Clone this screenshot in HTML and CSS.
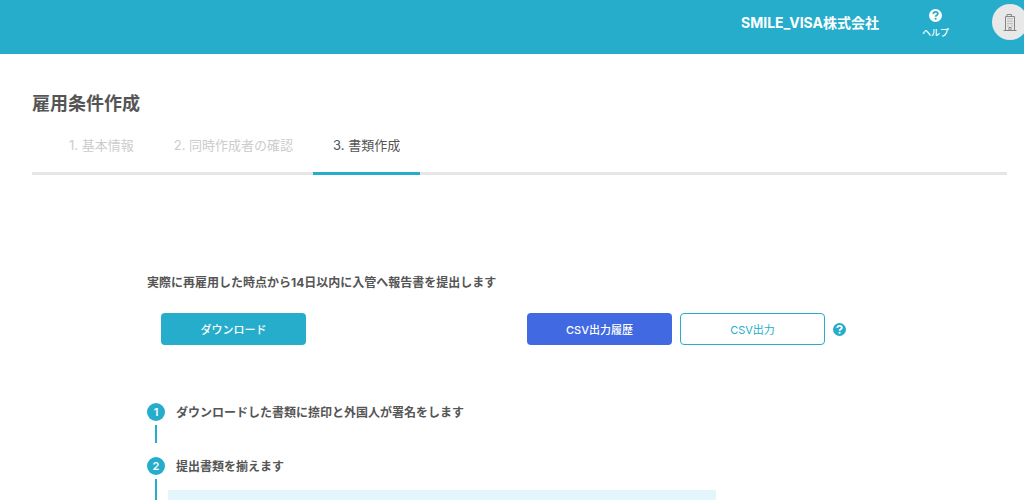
FILE: index.html
```html
<!DOCTYPE html>
<html lang="ja">
<head>
<meta charset="utf-8">
<meta name="viewport" content="width=device-width, initial-scale=1">
<title>雇用条件作成</title>
<link rel="stylesheet" href="styles.css">
</head>
<body>
<header class="header">
  <span class="company">SMILE_VISA株式会社</span>
  <a class="help" href="#help">
    <svg class="help-icon" viewBox="0 0 24 24" aria-hidden="true"><circle cx="12" cy="12" r="12" fill="#fff"/><path d="M7.800 9.200C8 6.700 9.800 5.200 12.100 5.200c2.400 0 4.200 1.400 4.200 3.500 0 2.900-4.100 2.800-4.100 5.700" fill="none" stroke="#25adcb" stroke-width="3.200"/><circle cx="12.200" cy="18" r="2" fill="#25adcb"/></svg>
    <span>ヘルプ</span>
  </a>
  <button class="avatar" type="button" aria-label="アカウント">
    <svg class="building" viewBox="0 0 14 18" fill="none" stroke="#858585" aria-hidden="true"><path d="M.5 17.500h13M2.500 17V3.500h9V17M4 3.500v-2h4.500v2M6 17v-2.500h2V17"/><path d="M4.500 5.700h1m1 0h1m1 0h1M4.500 8.200h1m1 0h1m1 0h1M4.500 10.700h1m1 0h1m1 0h1M4.500 13h1m3 0h1"/></svg>
  </button>
</header>
<main class="page">
  <h1 class="title">雇用条件作成</h1>
  <nav class="tabs" aria-label="手順">
    <a class="tab" href="#basic">1. 基本情報</a>
    <a class="tab" href="#authors">2. 同時作成者の確認</a>
    <a class="tab tab-active" href="#documents" aria-current="step">3. 書類作成</a>
  </nav>
  <section class="content">
    <h2 class="lead">実際に再雇用した時点から14日以内に入管へ報告書を提出します</h2>
    <div class="actions">
      <button class="button button-primary" type="button">ダウンロード</button>
      <div class="csv">
        <button class="button button-history" type="button">CSV出力履歴</button>
        <button class="button button-outline" type="button">CSV出力</button>
        <button class="hint" type="button" aria-label="CSV出力のヘルプ">
          <svg class="help-icon" viewBox="0 0 24 24" aria-hidden="true"><circle cx="12" cy="12" r="12" fill="#25adcb"/><path d="M7.800 9.200C8 6.700 9.800 5.200 12.100 5.200c2.400 0 4.200 1.400 4.200 3.500 0 2.900-4.100 2.800-4.100 5.700" fill="none" stroke="#fff" stroke-width="3.200"/><circle cx="12.200" cy="18" r="2" fill="#fff"/></svg>
        </button>
      </div>
    </div>
    <ol class="steps">
      <li class="step">
        <div class="rail"><span class="number">1</span><span class="line"></span></div>
        <div class="body"><h3 class="step-title">ダウンロードした書類に捺印と外国人が署名をします</h3></div>
      </li>
      <li class="step">
        <div class="rail"><span class="number">2</span><span class="line"></span></div>
        <div class="body"><h3 class="step-title">提出書類を揃えます</h3><div class="panel"></div></div>
      </li>
    </ol>
  </section>
</main>
</body>
</html>
```
FILE: styles.css
```css
* { box-sizing: border-box; }

body {
  margin: 0;
  overflow-x: hidden;
  color: #555;
  background: #fff;
  font-family: Inter, "Noto Sans CJK JP", sans-serif;
}

h1, h2, h3, ol { margin: 0; padding: 0; }
a { color: inherit; text-decoration: none; }
button { padding: 0; border: 0; font-family: inherit; cursor: pointer; }
svg { display: block; }

.header {
  display: flex;
  align-items: center;
  justify-content: flex-end;
  height: 54px;
  padding-bottom: 10px;
  color: #fff;
  background: #25adcb;
}

.company { font-size: 14px; font-weight: 700; }

.help {
  display: flex;
  flex-direction: column;
  align-items: center;
  gap: 4px;
  margin: 5px 43px 0;
  font-size: 9px;
  line-height: 14px;
  font-weight: 500;
}

.help-icon { width: 13px; height: 13px; }

.avatar {
  display: grid;
  place-items: center;
  width: 36px;
  height: 36px;
  margin-right: -4px;
  border-radius: 50%;
  background: #e8e8e8;
}

.building { width: 14px; height: 18px; }

.page { padding: 36px 17px 0 32px; }

.title {
  font-size: 18px;
  line-height: 28px;
  font-weight: 700;
}

.tabs {
  display: flex;
  padding-left: 17px;
  border-bottom: 3px solid #e6e6e6;
}

.tab {
  margin-bottom: -3px;
  padding: 17px 20px;
  border-bottom: 3px solid transparent;
  color: #ccc;
  font-size: 13px;
  line-height: 20px;
}

.tab-active { border-color: #25adcb; color: #555; }

.content {
  max-width: 745px;
  margin: 0 auto;
  padding-top: 98px;
}

.lead, .step-title {
  font-size: 12px;
  line-height: 20px;
  font-weight: 700;
}

.actions {
  display: flex;
  justify-content: space-between;
  padding: 20px 46px 0 14px;
}

.csv { display: flex; align-items: center; gap: 8px; }

.button {
  width: 145px;
  height: 32px;
  border-radius: 4px;
  font-size: 11px;
  font-weight: 500;
}

.button-primary { color: #fff; background: #25adcb; }
.button-history { color: #fff; background: #4169e1; }

.button-outline {
  border: 1px solid #25adcb;
  color: #25adcb;
  background: #fff;
  font-weight: 400;
}

.hint { background: none; }

.steps { padding-top: 58px; list-style: none; }
.step { display: flex; gap: 11px; }

.rail {
  display: flex;
  flex-direction: column;
  align-items: center;
  gap: 4px;
}

.number {
  display: grid;
  place-items: center;
  width: 18px;
  height: 18px;
  border-radius: 50%;
  color: #fff;
  background: #25adcb;
  font-size: 11px;
  line-height: 18px;
  font-weight: 600;
}

.line {
  flex: 1;
  width: 2px;
  min-height: 18px;
  margin-bottom: 14px;
  background: #25adcb;
}

.body { flex: 1; }

.panel {
  max-width: 548px;
  min-height: 10px;
  margin: 13px 0 0 -8px;
  background: #e3f6fb;
}

.step:last-child .line { margin-bottom: 0; }
```
